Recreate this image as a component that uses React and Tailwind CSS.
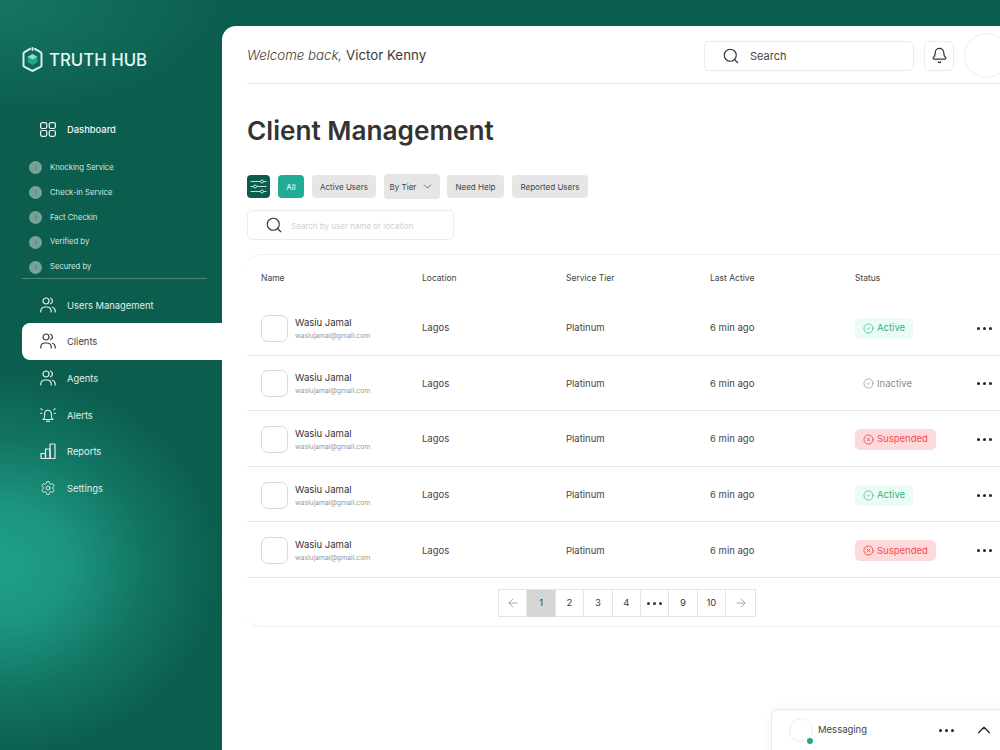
import { Settings, Search, Bell, ChevronDown, ChevronUp, ChevronRight, ArrowLeft, ArrowRight, CircleCheck, CircleX } from "lucide-react";

const subItems = ["Knocking Service", "Check-in Service", "Fact Checkin", "Verified by", "Secured by"];

const rows = [
  { status: "Active" },
  { status: "Inactive" },
  { status: "Suspended" },
  { status: "Active" },
  { status: "Suspended" },
];

function UsersIcon() {
  return (
    <svg width="16" height="16" viewBox="0 0 16 16" fill="none" stroke="currentColor" strokeWidth="1.2" strokeLinecap="round">
      <circle cx="6" cy="4" r="3" />
      <path d="M10.5 1.2a3 3 0 0 1 0 5.6" />
      <path d="M0.8 15v-1.5a4.2 4.2 0 0 1 4.2-3.5h2a4.2 4.2 0 0 1 4.2 3.5V15" />
      <path d="M12.6 10.2a4 4 0 0 1 2.6 3.4V15" />
    </svg>
  );
}

function GridIcon() {
  return (
    <svg width="16" height="15" viewBox="0 0 16 15" fill="none" stroke="currentColor" strokeWidth="1.2">
      <rect x="0.6" y="0.6" width="6.2" height="5.9" rx="1.8" />
      <rect x="9.2" y="0.6" width="6.2" height="5.9" rx="1.8" />
      <rect x="0.6" y="8.5" width="6.2" height="5.9" rx="1.8" />
      <rect x="9.2" y="8.5" width="6.2" height="5.9" rx="1.8" />
    </svg>
  );
}

function AlertIcon() {
  return (
    <svg width="18" height="16" viewBox="0 0 18 16" fill="none" stroke="currentColor" strokeWidth="1.2" strokeLinecap="round" strokeLinejoin="round">
      <path d="M3.5 13c1.2-1 1.7-2 1.7-3.5V6.5a3.8 3.8 0 0 1 7.6 0V9.5c0 1.5.5 2.5 1.7 3.5z" />
      <path d="M7.5 15.2h3" />
      <path d="M1 1l1.5 1.2M17 1l-1.5 1.2M.6 6h1.5M17.4 6h-1.5" />
    </svg>
  );
}

function ReportsIcon() {
  return (
    <svg width="16" height="16" viewBox="0 0 16 16" fill="none" stroke="currentColor" strokeWidth="1.2" strokeLinejoin="round">
      <path d="M1 10.5h4.5v5H1.5a.5.5 0 0 1-.5-.5z" />
      <path d="M5.5 6H10v9.5H5.5z" />
      <path d="M10 1h4.500a.5.5 0 0 1 .5.5V15a.5.5 0 0 1-.5.5H10z" />
    </svg>
  );
}

function FilterIcon() {
  return (
    <svg width="17" height="15" viewBox="0 0 17 15" fill="none" stroke="currentColor" strokeWidth="0.9">
      <path d="M0.5 2.5h10M13.5 2.5h3" />
      <circle cx="12" cy="2.5" r="1.5" />
      <path d="M0.5 7.5h3M6.5 7.5h10" />
      <circle cx="5" cy="7.5" r="1.5" />
      <path d="M0.5 12.5h10M13.5 12.5h3" />
      <circle cx="12" cy="12.5" r="1.5" />
    </svg>
  );
}

function Logo() {
  return (
    <svg width="21" height="25" viewBox="0 0 21 25" fill="none">
      <path d="M8 1.9 2.500 5.100A2 2 0 0 0 1.500 6.800v11.400a2 2 0 0 0 1 1.700L10.500 24l8-4.100a2 2 0 0 0 1-1.700V6.800a2 2 0 0 0-1-1.700L13 1.900" stroke="#d6f0ea" strokeWidth="2" strokeLinecap="round" />
      <path d="M10.5 1v2" stroke="#d6f0ea" strokeWidth="2" strokeLinecap="round" />
      <path d="M10.5 7l4.800 2.700v5.600l-4.800 2.700-4.800-2.700V9.700z" fill="#1fa88f" />
      <path d="M10.5 7l4.800 2.700-4.800 2.700-4.800-2.700z" fill="#8fdccb" />
    </svg>
  );
}

function NavItem({ icon, label, active }) {
  return (
    <div className={`flex h-[36.6px] items-center gap-[11px] pl-[18px] text-[9.4px] ${active ? "rounded-l-lg bg-white text-[#3a3a3a]" : "text-[#e4f0ed]"}`}>
      <span className="flex w-[16px] justify-center">{icon}</span>
      <span className="pt-[2px]">{label}</span>
    </div>
  );
}

function StatusBadge({ status }) {
  if (status === "Active") {
    return (
      <span className="inline-flex h-[21px] items-center gap-[3px] rounded-[5px] bg-[#ebfbf5] px-[8px] text-[9.5px] text-[#35b283]">
        <CircleCheck size={11} strokeWidth={1.5} />
        Active
      </span>
    );
  }
  if (status === "Suspended") {
    return (
      <span className="inline-flex h-[21px] items-center gap-[3px] rounded-[5px] bg-[#ffd9d9] px-[8px] text-[9.5px] text-[#f04d55]">
        <CircleX size={11} strokeWidth={2} />
        Suspended
      </span>
    );
  }
  return (
    <span className="inline-flex h-[21px] items-center gap-[3px] px-[8px] text-[9.5px] text-[#8c8c8c]">
      <CircleCheck size={11} strokeWidth={1.5} />
      Inactive
    </span>
  );
}

function Dots({ className }) {
  return (
    <span className={`flex items-center gap-[3px] ${className}`}>
      <span className="h-[3px] w-[3px] rounded-full bg-current" />
      <span className="h-[3px] w-[3px] rounded-full bg-current" />
      <span className="h-[3px] w-[3px] rounded-full bg-current" />
    </span>
  );
}

const pageCell = "flex h-[27px] w-[28.4px] items-center justify-center border-r border-[#e4e4e4] text-[9.5px] text-[#3a3a3a]";

export default function App() {
  return (
    <div
      className="relative flex h-[750px] w-[1000px] overflow-hidden bg-[#0b5d4e] font-['Inter',sans-serif]"
      style={{ backgroundImage: "radial-gradient(ellipse 225px 195px at 0px 565px, #1f9f88 0%, rgba(31,159,136,0.85) 30%, rgba(31,159,136,0.35) 65%, rgba(11,93,78,0) 100%), radial-gradient(ellipse 240px 120px at 0px 0px, #167565 0%, rgba(11,93,78,0) 100%)" }}
    >
      {/* Sidebar */}
      <aside className="w-[222px] shrink-0 pl-[22px] pt-[47px]">
        <div className="flex h-[25px] items-center gap-[6px] text-[#e6f5f1]">
          <Logo />
          <span className="pt-[2px] text-[16.8px] font-medium leading-none">TRUTH HUB</span>
        </div>
        <div className="mt-[49px] flex h-[16px] items-center gap-[11px] pl-[18px] text-[9.4px] font-medium text-[#eef7f5]">
          <GridIcon />
          <span className="pt-[2px]">Dashboard</span>
        </div>
        <div className="mt-[24px] flex flex-col gap-[11.9px] pl-[7px]">
          {subItems.map((item) => (
            <div key={item} className="flex h-[13px] items-center gap-[8px] text-[7.7px] text-[#d3e6e1]">
              <span className="flex h-[13px] w-[13px] items-center justify-center rounded-full bg-[#76a297]">
                <ChevronRight size={8} className="text-[#3d6f63]" />
              </span>
              {item}
            </div>
          ))}
        </div>
        <div className="mt-[4px] mr-[15px] h-px bg-[#4d8678]" />
        <div className="mt-[8px] flex flex-col">
          <NavItem icon={<UsersIcon />} label="Users Management" />
          <NavItem icon={<UsersIcon />} label="Clients" active />
          <NavItem icon={<UsersIcon />} label="Agents" />
          <NavItem icon={<AlertIcon />} label="Alerts" />
          <NavItem icon={<ReportsIcon />} label="Reports" />
          <NavItem icon={<Settings size={18} strokeWidth={1.3} />} label="Settings" />
        </div>
      </aside>

      {/* Main */}
      <main className="mt-[26px] min-w-0 flex-1 overflow-hidden rounded-tl-[14px] bg-white pl-[25px]">
        <header className="flex h-[58px] w-[762px] items-center border-b border-[#ececec] pt-[2px]">
          <p className="whitespace-nowrap pt-px text-[13.3px] text-[#3a3a3a]">
            <span className="font-light italic">Welcome back,</span> Victor Kenny
          </p>
          <div className="ml-auto flex h-[30px] w-[210px] items-center gap-[10px] rounded-[5px] border border-[#ececec] pl-[17px] text-[11px] text-[#444]">
            <Search size={18} strokeWidth={1.5} className="text-[#333]" />
            <span className="pt-px">Search</span>
          </div>
          <div className="ml-[10px] flex h-[30px] w-[30px] items-center justify-center rounded-[5px] border border-[#ececec]">
            <Bell size={17} strokeWidth={1.7} className="text-[#333]" />
          </div>
          <div className="ml-[10px] h-[45px] w-[45px] shrink-0 rounded-full border border-[#ececec]" />
        </header>

        <h1 className="mt-[31px] text-[26.2px] font-semibold leading-[32px] text-[#333]">Client Management</h1>

        {/* Filters */}
        <div className="mt-[27px] flex items-center text-[8px] text-[#444]">
          <span className="flex h-[23px] w-[23px] items-center justify-center rounded-[4px] bg-[#0b5d4e] text-[#d6f0ea]">
            <FilterIcon />
          </span>
          <span className="ml-[8px] flex h-[23px] w-[26px] items-center justify-center rounded-[4px] bg-[#22ab95] text-white">All</span>
          <span className="ml-[8px] flex h-[23px] w-[64px] items-center justify-center rounded-[4px] bg-[#e6e6e6]">Active Users</span>
          <span className="ml-[8px] flex h-[25px] w-[56px] items-center justify-center gap-[5px] rounded-[4px] bg-[#e6e6e6]">
            By Tier <ChevronDown size={13} strokeWidth={1.3} />
          </span>
          <span className="ml-[7px] flex h-[23px] w-[57px] items-center justify-center rounded-[4px] bg-[#e6e6e6]">Need Help</span>
          <span className="ml-[8px] flex h-[23px] w-[76px] items-center justify-center rounded-[4px] bg-[#e6e6e6]">Reported Users</span>
        </div>

        <div className="mt-[11px] flex h-[30px] w-[207px] items-center gap-[8px] rounded-[5px] border border-[#ececec] pl-[17px] text-[8px] text-[#d0d0d0]">
          <Search size={18} strokeWidth={1.5} className="shrink-0 text-[#333]" />
          <span className="pt-[2px]">Search by user name or location</span>
        </div>

        {/* Table */}
        <section className="mt-[14px] w-[780px] rounded-[14px] border-y border-[#efefef] pb-[9px]">
          <div className="grid h-[45px] grid-cols-[161px_144px_144px_145px_121px_40px] items-center pl-[14px] pt-[2px] text-[8.5px] text-[#444]">
            <span>Name</span>
            <span>Location</span>
            <span>Service Tier</span>
            <span>Last Active</span>
            <span>Status</span>
            <span />
          </div>
          {rows.map((row, i) => (
            <div key={i} className="grid h-[55.6px] grid-cols-[161px_144px_144px_145px_121px_40px] items-center border-b border-[#e8e8e8] pl-[14px] pt-[2px] text-[9.5px] text-[#444]">
              <div className="flex items-center gap-[7px]">
                <span className="h-[27px] w-[27px] rounded-[7px] border border-[#d9d9d9]" />
                <div>
                  <div className="text-[9.5px] leading-[13px] text-[#333]">Wasiu Jamal</div>
                  <div className="mt-[2px] text-[6.8px] leading-[10px] text-[#999]">wasiujamal@gmail.com</div>
                </div>
              </div>
              <span>Lagos</span>
              <span>Platinum</span>
              <span>6 min ago</span>
              <span><StatusBadge status={row.status} /></span>
              <Dots className="pl-px text-[#222]" />
            </div>
          ))}
          <div className="mt-[11px] ml-[251px] flex h-[28px] w-[258px] border border-[#e4e4e4]">
            <span className={pageCell}><ArrowLeft size={14} strokeWidth={1.2} className="text-[#888]" /></span>
            <span className={`${pageCell} bg-[#d6d6d6]`}>1</span>
            <span className={pageCell}>2</span>
            <span className={pageCell}>3</span>
            <span className={pageCell}>4</span>
            <span className={pageCell}><Dots className="text-[#333]" /></span>
            <span className={pageCell}>9</span>
            <span className={pageCell}>10</span>
            <span className="flex h-[27px] flex-1 items-center justify-center"><ArrowRight size={14} strokeWidth={1.2} className="text-[#888]" /></span>
          </div>
        </section>
      </main>

      {/* Messaging dock */}
      <div className="absolute left-[771px] top-[709px] flex h-[50px] w-[240px] items-start rounded-t-[7px] border border-[#e8e8e8] bg-white pl-[17px] pt-[8px] shadow-[0_0_10px_rgba(0,0,0,0.05)]">
        <span className="relative h-[24px] w-[24px] rounded-full border border-[#ececec]">
          <span className="absolute bottom-[-3px] right-[-1px] h-[6px] w-[6px] rounded-full bg-[#22a874]" />
        </span>
        <span className="ml-[5px] mt-[5px] text-[9.5px] text-[#444]">Messaging</span>
        <Dots className="ml-[72px] mt-[11px] text-[#222]" />
        <ChevronUp size={22} strokeWidth={1.3} className="ml-[19px] mt-[1px] text-[#222]" />
      </div>
    </div>
  );
}
